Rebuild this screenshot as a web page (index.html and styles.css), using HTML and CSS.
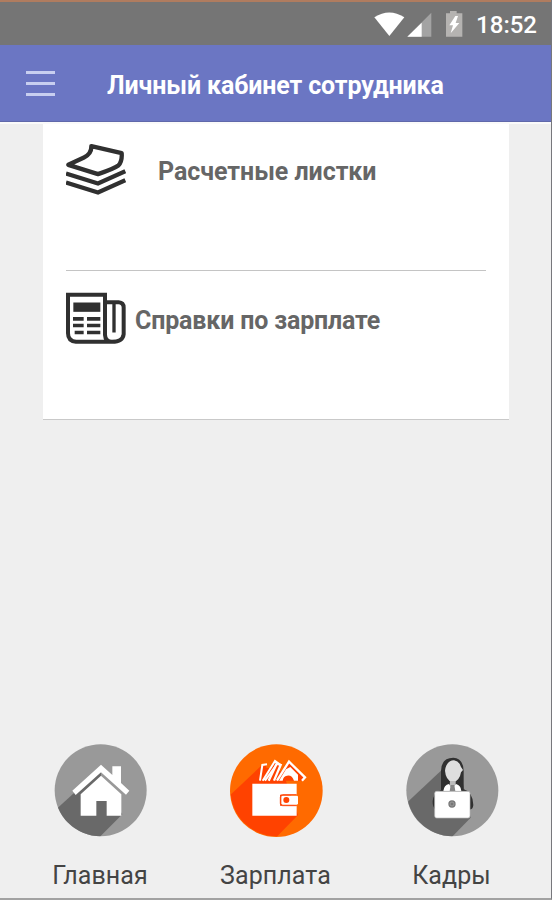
FILE: index.html
```html
<!DOCTYPE html>
<html lang="ru">
<head>
<meta charset="utf-8">
<title>Личный кабинет сотрудника</title>
<link rel="stylesheet" href="styles.css">
</head>
<body>
<div class="screen">
  <div class="status">
    <svg class="status-icons" viewBox="0 0 270 84" aria-hidden="true">
      <path fill="#fff" d="M1 19Q46-10 91 19L46 75Z"/>
      <path fill="#a3a3a3" d="M172 5V77H100Z"/>
      <path fill="#fff" d="M143 35V77H100Z"/>
      <path fill="#b5b3b1" d="M228 0H248V7H265V77H216V7H228Z"/>
      <path fill="#fff" d="M244 15L226 43H237L230 67L256 36H245L252 15Z"/>
    </svg>
    <span class="clock">18:52</span>
  </div>
  <header class="bar">
    <div class="menu"><i></i><i></i><i></i></div>
    <h1 class="title">Личный кабинет сотрудника</h1>
  </header>
  <main class="content">
    <section class="card">
      <div class="row row-first">
        <svg class="row-icon" viewBox="78 36 180 164" fill="none" stroke="#303030" stroke-width="13" aria-hidden="true">
          <path stroke-linejoin="round" d="M154 48L245 69Q247 94 235 106Q223 115 174 132L85 104L132 82Q155 71 154 48Z"/>
          <path d="M78 130L174 160L256 123M78 157L174 187L256 150"/>
        </svg>
        <span class="label label-sheets">Расчетные листки</span>
      </div>
      <div class="row">
        <svg class="row-icon" viewBox="78 94 180 164" fill="none" stroke="#303030" stroke-width="12" aria-hidden="true">
          <path d="M84 105H195V225Q196 246 216 246H108Q84 243 84 220Z"/>
          <path d="M198 127H236Q251 128 251 143V223Q248 246 216 246"/>
          <path stroke-width="10" d="M222 132V218"/>
          <path fill="#303030" stroke="none" d="M100 128H181V156H100Z"/>
          <path stroke-width="11" d="M99 177H131M141 177H181M99 197H131M141 197H181M104 218H131M141 218H181"/>
        </svg>
        <span class="label label-refs">Справки по зарплате</span>
      </div>
    </section>
  </main>
  <nav class="nav">
    <div class="tab">
      <svg class="tab-icon" viewBox="42 24 282 282" aria-hidden="true">
        <clipPath id="disc"><circle cx="182" cy="166" r="138"/></clipPath>
        <circle cx="182" cy="166" r="138" fill="#999"/>
        <path clip-path="url(#disc)" fill="#696969" d="M98 178L30 240V320H165L247 238L180 110Z"/>
        <path fill="#999" d="M183 100L268 179L247 190V238L183 122Z"/>
        <path fill="#fff" d="M183 122L244 178V242H200V198H169V242H122V178Z"/>
        <path fill="#fff" d="M183 89L217 120V94H243V144L268 167L258 179L183 112L107 180L97 167Z"/>
      </svg>
      <span class="tab-label">Главная</span>
    </div>
    <div class="tab">
      <svg class="tab-icon" viewBox="42 24 282 282" aria-hidden="true">
        <circle cx="181" cy="167" r="139" fill="#ff6a00"/>
        <path clip-path="url(#disc)" fill="#ff4200" d="M134 94L30 192V320H168L246 240L200 110Z"/>
        <path fill="#ff4200" stroke="#fff" stroke-width="6" d="M132 137L139 90L153 88M140 137L177 78L194 90M147 137L180 92"/>
        <path fill="#ff4200" stroke="#fff" stroke-width="7" d="M158 137L182 86L194 90L174 137M183 137L219 80L267 127L258 137"/>
        <path fill="#fff" d="M189 137L210 103L223 96L246 119V137H234Q228 119 213 122Q202 124 200 137Z"/>
        <path fill="#fff" d="M109 146H242V179H192V212H242V242H109Z"/>
        <rect x="196" y="182" width="50" height="27" rx="4" fill="#fff"/>
        <path fill="none" stroke="#ff4d12" stroke-width="3" d="M242 179H200Q193 179 193 186V205Q193 212 200 212H242"/>
        <circle cx="211" cy="195" r="9" fill="#ff4200"/>
      </svg>
      <span class="tab-label tab-label-pay">Зарплата</span>
    </div>
    <div class="tab">
      <svg class="tab-icon" viewBox="42 24 282 282" aria-hidden="true">
        <circle cx="181" cy="166" r="138" fill="#999"/>
        <path clip-path="url(#disc)" fill="#696969" d="M150 104L30 217V320H166L236 248L205 110Z"/>
        <path fill="#303030" d="M147 165V108Q148 68 184 68Q214 70 215 108V163Q242 170 244 210Q243 224 232 224H130Q121 215 122 198Q124 176 147 165Z"/>
        <path fill="#dedede" d="M186 76Q202 78 207 96L213 105L207 112Q203 138 182 143Q161 135 159 107Q162 78 186 76Z"/>
        <path fill="#bbb" d="M174 138H191V151L181 165L173 151Z"/>
        <path fill="#fff" d="M154 168Q156 150 171 147L180 162L192 147Q207 151 208 168Z"/>
        <path fill="#858585" d="M176 150H187L190 169H173Z"/>
        <rect x="128" y="169" width="106" height="80" rx="6" fill="#fff" stroke="#b5b5b5" stroke-width="2"/>
        <circle cx="180" cy="207" r="11" fill="#777"/>
        <circle cx="180" cy="207" r="6" fill="none" stroke="#a9a9a9" stroke-width="2"/>
      </svg>
      <span class="tab-label tab-label-staff">Кадры</span>
    </div>
  </nav>
</div>
</body>
</html>
```
FILE: styles.css
```css
* { box-sizing: border-box; }
body { margin: 0; font-family: Roboto, "Liberation Sans", sans-serif; }
.screen {
  width: 552px;
  height: 900px;
  display: flex;
  flex-direction: column;
  background: #efefef;
  border-right: 1px solid #77777c;
  border-bottom: 2px solid #a2a2a2;
}
.status {
  height: 45px;
  flex: none;
  display: flex;
  align-items: flex-start;
  justify-content: flex-end;
  padding: 9px 14px 0 0;
  background: #757575;
  border-top: 2px solid #b07c5f;
}
.status-icons { width: 90px; height: 28px; margin-right: 12px; }
.clock {
  color: #fff;
  font-size: 24px;
  line-height: 28px;
  font-weight: 500;
}
.bar {
  height: 77px;
  flex: none;
  display: flex;
  align-items: center;
  padding-left: 26px;
  background: #6b76c3;
  border-bottom: 1px solid #6068aa;
}
.menu { width: 29px; display: flex; flex-direction: column; gap: 8px; }
.menu i { height: 3px; background: #c8cff0; }
.title {
  margin: 6px 0 0 52px;
  color: #fff;
  font-size: 25px;
  line-height: 30px;
  font-weight: 700;
  letter-spacing: -0.12px;
  white-space: nowrap;
}
.content { flex: 1; border-top: 2px solid #fafafa; }
.card {
  width: 466px;
  height: 296px;
  margin: 0 0 0 43px;
  padding: 0 23px;
  background: #fff;
  border-bottom: 1px solid #c9c9c9;
}
.row { height: 147px; display: flex; align-items: flex-start; padding-top: 20px; }
.row-first { border-bottom: 1px solid #c4c4c4; padding-top: 18px; }
.row-icon { width: 60px; height: 55px; flex: none; }
.label {
  color: #666;
  font-size: 25px;
  line-height: 30px;
  font-weight: 700;
  white-space: nowrap;
}
.label-sheets { margin: 15px 0 0 32px; letter-spacing: -0.05px; }
.label-refs { margin: 15px 0 0 9px; letter-spacing: -0.16px; }
.nav {
  height: 155px;
  flex: none;
  display: grid;
  grid-template-columns: repeat(3, 176px);
  padding-left: 13px;
}
.tab { display: flex; flex-direction: column; align-items: center; }
.tab-icon { width: 94px; height: 94px; }
.tab-label {
  margin: 24px 2px 0 0;
  color: #444;
  font-size: 25px;
  line-height: 30px;
  letter-spacing: 0.1px;
}
.tab-label-pay, .tab-label-staff { margin-right: 3px; }
```
